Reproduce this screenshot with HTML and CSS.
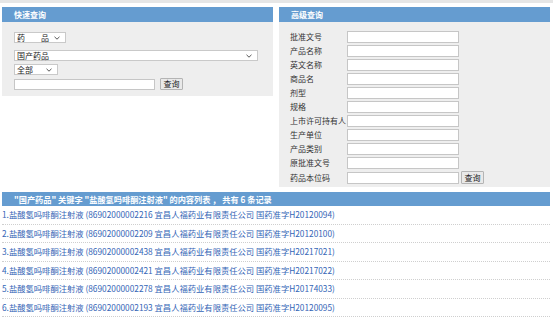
FILE: index.html
```html
<!DOCTYPE html>
<html lang="zh-CN">
<head>
<meta charset="utf-8">
<title>查询</title>
<link rel="stylesheet" href="styles.css">
</head>
<body>
<div class="topbar"></div>
<div class="page">
  <div class="panels">
    <section class="panel quick">
      <h2 class="panel-head">快速查询</h2>
      <div class="quick-body">
        <div class="sel sel-type"><span>药&emsp;&emsp;品</span><svg class="chev" width="6" height="4" viewBox="0 0 6 4"><path d="M0.5 0.8 L3 3.2 L5.5 0.8" fill="none" stroke="#444" stroke-width="0.9"/></svg></div>
        <div class="sel sel-cat"><span>国产药品</span><svg class="chev" width="6" height="4" viewBox="0 0 6 4"><path d="M0.5 0.8 L3 3.2 L5.5 0.8" fill="none" stroke="#444" stroke-width="0.9"/></svg></div>
        <div class="sel sel-all"><span>全部</span><svg class="chev" width="6" height="4" viewBox="0 0 6 4"><path d="M0.5 0.8 L3 3.2 L5.5 0.8" fill="none" stroke="#444" stroke-width="0.9"/></svg></div>
        <div class="search-row">
          <input class="txt txt-quick" type="text">
          <button class="btn" type="button">查询</button>
        </div>
      </div>
    </section>
    <section class="panel adv">
      <h2 class="panel-head">高级查询</h2>
      <div class="adv-body">
        <label>批准文号</label><div class="fld"><input class="txt" type="text"></div>
        <label>产品名称</label><div class="fld"><input class="txt" type="text"></div>
        <label>英文名称</label><div class="fld"><input class="txt" type="text"></div>
        <label>商品名</label><div class="fld"><input class="txt" type="text"></div>
        <label>剂型</label><div class="fld"><input class="txt" type="text"></div>
        <label>规格</label><div class="fld"><input class="txt" type="text"></div>
        <label>上市许可持有人</label><div class="fld"><input class="txt" type="text"></div>
        <label>生产单位</label><div class="fld"><input class="txt" type="text"></div>
        <label>产品类别</label><div class="fld"><input class="txt" type="text"></div>
        <label>原批准文号</label><div class="fld"><input class="txt" type="text"></div>
        <label>药品本位码</label><div class="fld"><input class="txt" type="text"><button class="btn" type="button">查询</button></div>
      </div>
    </section>
  </div>
  <section class="results">
    <h2 class="results-head">"国产药品" 关键字 "盐酸氢吗啡酮注射液" 的内容列表 ， 共有 6 条记录</h2>
    <ul class="result-list">
      <li><a href="#">1.盐酸氢吗啡酮注射液 (86902000002216 宜昌人福药业有限责任公司 国药准字H20120094)</a></li>
      <li><a href="#">2.盐酸氢吗啡酮注射液 (86902000002209 宜昌人福药业有限责任公司 国药准字H20120100)</a></li>
      <li><a href="#">3.盐酸氢吗啡酮注射液 (86902000002438 宜昌人福药业有限责任公司 国药准字H20217021)</a></li>
      <li><a href="#">4.盐酸氢吗啡酮注射液 (86902000002421 宜昌人福药业有限责任公司 国药准字H20217022)</a></li>
      <li><a href="#">5.盐酸氢吗啡酮注射液 (86902000002278 宜昌人福药业有限责任公司 国药准字H20174033)</a></li>
      <li><a href="#">6.盐酸氢吗啡酮注射液 (86902000002193 宜昌人福药业有限责任公司 国药准字H20120095)</a></li>
    </ul>
  </section>
</div>
</body>
</html>
```

FILE: styles.css
```css
* { box-sizing: border-box; }
html, body { margin: 0; padding: 0; background: #fff; }
body {
  font-family: "Noto Sans CJK SC", "Noto Sans", sans-serif;
  font-size: 8px;
  color: #333;
  width: 553px;
  overflow: hidden;
}
.topbar { height: 3px; background: #e6e6e6; }
.page { padding: 4px 3px 0 2px; }
.panels { display: flex; gap: 6px; align-items: flex-start; }
.panel { background: #eeeeee; }
.quick { width: 271px; height: 89px; }
.adv { width: 271px; height: 180px; }
.panel-head {
  margin: 0;
  height: 15px;
  line-height: 15px;
  background: #659cd0;
  color: #fff;
  font-size: 8px;
  font-weight: bold;
  padding-left: 12px;
}
.quick-body {
  padding: 10px 0 0 12px;
  display: flex;
  flex-direction: column;
  align-items: flex-start;
}
.sel {
  position: relative;
  height: 11px;
  line-height: 10px;
  background: #fff;
  border: 1px solid #c9c9c9;
  padding-left: 2px;
  color: #222;
}
.sel .chev { position: absolute; right: 5px; top: 3px; }
.sel-type { width: 52px; margin-bottom: 7px; }
.sel-cat { width: 244px; margin-bottom: 3px; }
.sel-all { width: 44px; margin-bottom: 3px; }
.search-row { display: flex; gap: 5px; align-items: center; }
.txt {
  display: block;
  height: 12px;
  width: 112px;
  margin: 0;
  padding: 0;
  border: 1px solid #c6c6c6;
  background: #fff;
  outline: none;
}
.txt-quick { width: 141px; height: 11px; }
.btn {
  height: 12px;
  width: 23px;
  margin: 0;
  padding: 0;
  font-family: inherit;
  font-size: 8px;
  line-height: 10px;
  color: #222;
  background: #e9e9e9;
  border: 1px solid #b4b4b4;
  border-radius: 1px;
}
.adv-body {
  padding: 9px 0 0 11px;
  display: grid;
  grid-template-columns: 57px auto;
  row-gap: 2px;
  align-items: center;
}
.adv-body label {
  line-height: 12px;
  height: 12px;
  color: #333;
  white-space: nowrap;
}
.fld { display: flex; gap: 2px; align-items: center; }
.fld .btn { height: 13px; }
.results { margin-top: 5px; width: 548px; }
.results-head {
  margin: 0;
  height: 14px;
  line-height: 14px;
  background: #659cd0;
  color: #fff;
  font-size: 8.2px;
  font-weight: bold;
  padding-left: 12px;
}
.result-list { list-style: none; margin: 0; padding: 0; }
.result-list li {
  height: 18.5px;
  line-height: 17.5px;
  font-size: 8.3px;
  border-bottom: 1px dotted #cfcfcf;
  white-space: nowrap;
}
.result-list a { color: #3465b6; text-decoration: none; }
```
